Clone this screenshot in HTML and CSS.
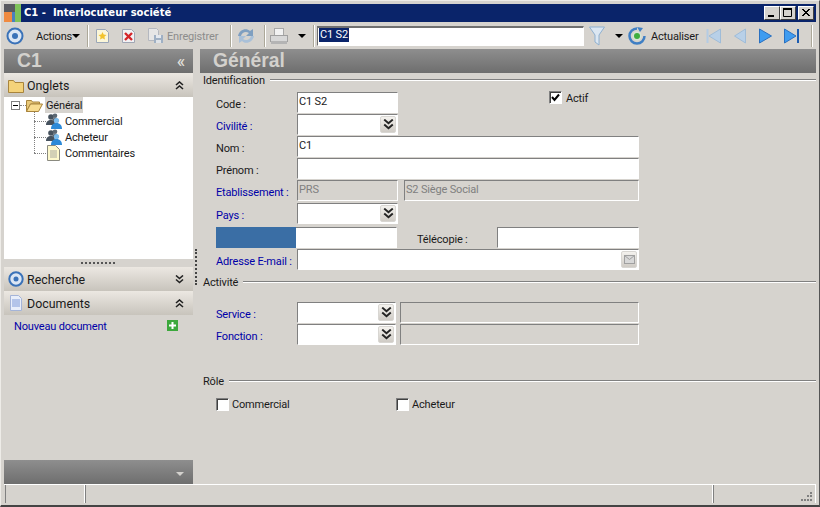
FILE: index.html
```html
<!DOCTYPE html>
<html lang="fr">
<head>
<meta charset="utf-8">
<title>C1 - Interlocuteur société</title>
<link rel="stylesheet" href="styles.css">
</head>
<body>
<svg class="defs" width="0" height="0" aria-hidden="true"><defs>
  <g id="people"><circle cx="5" cy="4" r="2.800" fill="#46525e"/><path d="M0 12c0-3.500 2-5 5-5s4 1.500 4 5z" fill="#46525e"/><circle cx="9" cy="2.800" r="2.300" fill="#5c6873"/><path d="M6 8c0-2 1-3 3-3s4 1.500 4 4z" fill="#5c6873"/><circle cx="10.500" cy="7.500" r="2.600" fill="#7cbcec"/><path d="M5 16c0-3.500 2-6 5.500-6s5.500 2.500 5.500 6z" fill="#2c8ad8"/></g>
  <path id="dd" d="M1 .5l3.500 3 3.500-3M1 4.500l3.500 3 3.500-3" fill="none" stroke="#222" stroke-width="1.600"/>
  <path id="uu" d="M1 4l3.500-3 3.500 3M1 8l3.500-3 3.500 3" fill="none" stroke="#222" stroke-width="1.600"/>
</defs></svg>
<div class="window">
  <div class="titlebar">
    <svg class="logo" width="17" height="18" viewBox="0 0 17 18"><rect width="11" height="8" fill="#5a5a60"/><rect x="11" width="6" height="18" fill="#7fc25a"/><rect y="8" width="8" height="10" fill="#f08a40"/><rect x="8" y="8" width="3" height="10" fill="#4a80c0"/></svg>
    <span class="title">C1 -&nbsp; Interlocuteur société</span>
    <div class="winbtns">
      <span class="winbtn"><svg width="14" height="12" viewBox="0 0 14 12"><rect x="3" y="8" width="6" height="2" fill="#000"/></svg></span>
      <span class="winbtn"><svg width="14" height="12" viewBox="0 0 14 12"><path d="M2.500 2.500h8v7h-8z" fill="none" stroke="#000"/><rect x="2" y="1" width="9" height="2"/></svg></span>
      <span class="winbtn close"><svg width="14" height="12" viewBox="0 0 14 12"><path d="M3 2l7 7M4 2l7 7M10 2l-7 7M11 2l-7 7" stroke="#000" fill="none"/></svg></span>
    </div>
  </div>

  <div class="toolbar">
    <svg class="t-target" width="18" height="18" viewBox="0 0 18 18"><circle cx="9" cy="9" r="7.500" fill="#dbe6f4" stroke="#3a72b8" stroke-width="2"/><circle cx="9" cy="9" r="3" fill="#3a72b8"/></svg>
    <span class="t-actions">Actions</span><i class="caret c-actions"></i>
    <i class="sep s1"></i>
    <svg class="t-new" width="15" height="16" viewBox="0 0 15 16"><path d="M1.500 1.500h9l3 3v10h-12z" fill="#fbf6d8" stroke="#9aa6b8"/><path d="M7.500 4l1.200 2.600 2.800.3-2.100 1.900.6 2.800-2.500-1.400-2.500 1.400.6-2.800-2.100-1.900 2.800-.3z" fill="#f2c32c"/></svg>
    <svg class="t-del" width="15" height="16" viewBox="0 0 15 16"><path d="M1.500 1.500h9l3 3v10h-12z" fill="#f2f2f4" stroke="#a0a6b4"/><path d="M4 5l7 7M11 5l-7 7" stroke="#d4262a" stroke-width="2.400"/></svg>
    <svg class="t-save" width="17" height="17" viewBox="0 0 17 17"><path d="M1.500 1.500h8l2 2v10h-10z" fill="#e6e6e6" stroke="#b4b8c0"/><rect x="7" y="8" width="9" height="8" fill="#9fb0c4"/><rect x="9" y="8" width="5" height="3" fill="#e4e8ee"/><rect x="9" y="13" width="5" height="3" fill="#dfe3e8"/></svg>
    <span class="t-save-text">Enregistrer</span>
    <i class="sep s2"></i>
    <svg class="t-sync" width="18" height="18" viewBox="0 0 18 18"><path d="M1 9C2 3 9 0 13 4l3-2v7H9l3-3C9 4 5 5 4 9z" fill="#7f9fc0"/><path d="M17 9c-1 6-8 9-12 5l-3 2V9h7l-3 3c3 2 7 1 8-3z" fill="#a9c0d8"/></svg>
    <i class="sep s3"></i>
    <svg class="t-print" width="18" height="18" viewBox="0 0 18 18"><rect x="4.500" y="1.500" width="9" height="7" fill="#f2f2f2" stroke="#a8a8a8"/><rect x=".5" y="8.500" width="17" height="6" fill="#d8d8d8" stroke="#a0a0a0"/><rect x="1" y="14" width="16" height="3" fill="#b4b4b4"/></svg>
    <i class="caret c-print"></i>
    <i class="sep s4"></i>
    <div class="search"><span class="selected">C1 S2</span></div>
    <svg class="t-filter" width="16" height="20" viewBox="0 0 16 20"><path d="M.5 1h15l-5.500 8v10l-4-3V9z" fill="#dce7f2" stroke="#8fb0d0"/></svg>
    <i class="caret c-filter"></i>
    <svg class="t-refresh" width="18" height="18" viewBox="0 0 18 18"><path d="M9 1.500a7.500 7.500 0 1 0 7.500 7.500" fill="none" stroke="#3f7fc4" stroke-width="2.500"/><path d="M9 0l6 1-3 4z" fill="#3f7fc4"/><circle cx="9" cy="9" r="4.500" fill="#d5e5d5"/><circle cx="9" cy="9" r="3" fill="#3fae3f"/></svg>
    <span class="t-refresh-text">Actualiser</span>
    <svg class="t-first" width="15" height="16" viewBox="0 0 15 16"><rect x=".5" y="1" width="2" height="14" fill="#b4cce4"/><path d="M14.500 1v14L3 8z" fill="#b8d0e8" stroke="#9fbcd8"/></svg>
    <svg class="t-prev" width="12" height="16" viewBox="0 0 12 16"><path d="M11.500 1v14L.5 8z" fill="#b8d0e8" stroke="#9fbcd8"/></svg>
    <svg class="t-next" width="13" height="16" viewBox="0 0 13 16"><path d="M.5 1v14L12.500 8z" fill="#3f9cf0" stroke="#2a70c0"/></svg>
    <svg class="t-last" width="16" height="16" viewBox="0 0 16 16"><path d="M.5 1v14L12 8z" fill="#3f9cf0" stroke="#2a70c0"/><rect x="13" y="1" width="2" height="14" fill="#1c5cb0"/></svg>
    <i class="sep s5"></i>
  </div>

  <div class="main">
    <aside class="left">
      <div class="band-dark left-head"><span class="big">C1</span><span class="collapse">«</span></div>
      <div class="band"><svg class="band-ico" width="16" height="15" viewBox="0 0 16 15"><path d="M.5 2.500h5l1.500 2h8.500v10H.5z" fill="#f4d27a" stroke="#a8843c"/></svg><span class="band-text">Onglets</span><svg class="chev" width="9" height="9" viewBox="0 0 9 9"><use href="#uu"/></svg></div>
      <div class="tree">
        <div class="tree-row root">
          <span class="box"></span><i class="dot-h short"></i>
          <svg width="17" height="14" viewBox="0 0 17 14"><path d="M.5 2.500h5l1 1.500h7v2h-9l-4 7.500z" fill="#e8c878" stroke="#a8843c"/><path d="M.5 13.500l4-7.500h12l-4 7.500z" fill="#f8dc90" stroke="#a8843c"/></svg>
          <span class="tree-sel">Général</span>
        </div>
        <div class="tree-row child"><i class="dot-h"></i><svg class="people" width="16" height="16" viewBox="0 0 16 16"><use href="#people"/></svg><span>Commercial</span></div>
        <div class="tree-row child"><i class="dot-h"></i><svg class="people" width="16" height="16" viewBox="0 0 16 16"><use href="#people"/></svg><span>Acheteur</span></div>
        <div class="tree-row child"><i class="dot-h"></i><svg class="note" width="13" height="16" viewBox="0 0 13 16"><path d="M.5.500h8l4 4v11H.5z" fill="#fdf8cc" stroke="#8a8a80"/><path d="M3 6h7M3 8h7M3 10h7M3 12h7" stroke="#a8a8a0"/></svg><span>Commentaires</span></div>
      </div>
      <div class="grip"><i></i></div>
      <div class="band"><svg class="band-ico" width="16" height="16" viewBox="0 0 16 16"><circle cx="8" cy="8" r="6.700" fill="#dbe6f4" stroke="#3a72b8" stroke-width="2"/><circle cx="8" cy="8" r="2.500" fill="#3a72b8"/></svg><span class="band-text">Recherche</span><svg class="chev" width="9" height="9" viewBox="0 0 9 9"><use href="#dd"/></svg></div>
      <div class="band"><svg class="band-ico" width="16" height="16" viewBox="0 0 16 16"><path d="M2.500.500h8l3 3v12h-11z" fill="#e8eefa" stroke="#a4b4d8"/><path d="M4 5h8M4 7h8M4 9h8M4 11h8" stroke="#7f9ad8"/></svg><span class="band-text">Documents</span><svg class="chev" width="9" height="9" viewBox="0 0 9 9"><use href="#uu"/></svg></div>
      <div class="doc-row"><a class="blue">Nouveau document</a><svg width="11" height="11" viewBox="0 0 11 11"><rect width="11" height="11" fill="#3ca83c"/><path d="M5.500 2v7M2 5.500h7" stroke="#fff" stroke-width="2"/></svg></div>
      <div class="spacer"></div>
      <div class="band-dark foot"><i class="foot-caret"></i></div>
    </aside>

    <div class="splitter"><i></i></div>

    <section class="right">
      <div class="band-dark right-head"><span class="big">Général</span></div>
      <div class="form">
        <div class="legend l-id"><span>Identification</span><i></i></div>
        <div class="row r-code">
          <label class="lab">Code :</label><div class="field w101"><span>C1 S2</span></div>
          <div class="actif"><span class="check on"><svg width="9" height="9" viewBox="0 0 9 9"><path d="M1 4l2.500 3L8 1.500" fill="none" stroke="#000" stroke-width="2"/></svg></span><span>Actif</span></div>
        </div>
        <div class="row"><label class="lab blue">Civilité :</label><div class="field w101 combo"><span class="ddb"><svg width="11" height="11" viewBox="0 0 9 9"><use href="#dd"/></svg></span></div></div>
        <div class="row"><label class="lab">Nom :</label><div class="field w342"><span>C1</span></div></div>
        <div class="row"><label class="lab">Prénom :</label><div class="field w342"></div></div>
        <div class="row"><label class="lab blue">Etablissement :</label><div class="field w101 off"><span>PRS</span></div><div class="field w235 off"><span>S2 Siège Social</span></div></div>
        <div class="row r-pays"><label class="lab blue">Pays :</label><div class="field w101 combo"><span class="ddb"><svg width="11" height="11" viewBox="0 0 9 9"><use href="#dd"/></svg></span></div></div>
        <div class="row r-tel"><div class="bluebox"></div><div class="field w101 flat"></div><label class="lab-fax">Télécopie :</label><div class="field w142"></div></div>
        <div class="row"><label class="lab blue">Adresse E-mail :</label><div class="field w342 combo"><span class="ddb mail"><svg width="11" height="9" viewBox="0 0 11 9"><rect x=".5" y=".5" width="10" height="8" fill="#d8d8d8" stroke="#a0a0a0"/><path d="M.5.500l5 4 5-4" fill="none" stroke="#a0a0a0"/></svg></span></div></div>
        <div class="legend l-act"><span>Activité</span><i></i></div>
        <div class="row r-serv"><label class="lab blue">Service :</label><div class="field w99 combo"><span class="ddb"><svg width="11" height="11" viewBox="0 0 9 9"><use href="#dd"/></svg></span></div><div class="field w239 off"></div></div>
        <div class="row"><label class="lab blue">Fonction :</label><div class="field w99 combo"><span class="ddb"><svg width="11" height="11" viewBox="0 0 9 9"><use href="#dd"/></svg></span></div><div class="field w239 off"></div></div>
        <div class="legend l-role"><span>Rôle</span><i></i></div>
        <div class="roles">
          <div class="role r1"><span class="check"></span><span class="role-text">Commercial</span></div>
          <div class="role"><span class="check"></span><span class="role-text">Acheteur</span></div>
        </div>
      </div>
    </section>
  </div>

  <div class="status">
    <div class="cell c1"></div><div class="cell c2"></div>
    <div class="cell c3"><svg width="12" height="11" viewBox="0 0 12 11" fill="#808080"><rect x="9" y="1" width="2" height="2"/><rect x="6" y="4" width="2" height="2"/><rect x="9" y="4" width="2" height="2"/><rect x="3" y="8" width="2" height="2"/><rect x="6" y="8" width="2" height="2"/><rect x="9" y="8" width="2" height="2"/><rect y="8" width="2" height="2"/></svg></div>
  </div>
</div>
</body>
</html>
```

FILE: styles.css
```css
* { box-sizing: border-box; }
html, body { margin: 0; height: 100%; }
body { width: 820px; height: 507px; overflow: hidden; background: #d6d3ce; font: 11px/16px Roboto, "Noto Sans", sans-serif; letter-spacing: -0.17px; color: #1a1a1a; }
.defs { display: block; height: 0; }
.window { width: 820px; height: 507px; display: flex; flex-direction: column; background: #d6d3ce; border-top: 1px solid #eeece8; border-left: 1px solid #eeece8; border-right: 1px solid #555; border-bottom: 2px solid #444; padding: 3px 3px 0; }

.titlebar { height: 18px; flex: none; background: #0a246a; display: flex; align-items: center; color: #fff; }
.logo { flex: none; }
.title { margin-left: 3px; font: bold 10px/14px "DejaVu Sans", sans-serif; letter-spacing: 0; }
.winbtns { margin-left: auto; display: flex; margin-right: 2px; }
.winbtn { width: 16px; height: 14px; background: #d6d3ce; border: 1px solid; border-color: #fff #404040 #404040 #fff; display: flex; }
.winbtn svg { display: block; }
.close { margin-left: 2px; }

.toolbar { height: 27px; flex: none; display: flex; align-items: center; }
.toolbar svg, .toolbar i { flex: none; }
.t-target { margin-left: 2px; }
.t-actions { margin-left: 12px; width: 35px; padding-top: 2px; }
.caret { display: block; width: 0; height: 0; border: 4px solid transparent; border-top-color: #000; border-bottom-width: 0; }
.c-actions { margin-left: 1px; }
.sep { display: block; width: 2px; height: 22px; background: #aca899; border-right: 1px solid #fff; }
.s1 { margin-left: 7px; }
.t-new { margin-left: 6px; }
.t-del { margin-left: 11px; }
.t-save { margin-left: 11px; }
.t-save-text { margin-left: 3px; width: 54px; padding-top: 2px; color: #8c8c8c; white-space: nowrap; }
.s2 { margin-left: 9px; }
.t-sync { margin-left: 5px; }
.s3 { margin-left: 9px; }
.t-print { margin-left: 4px; }
.c-print { margin-left: 10px; }
.s4 { margin-left: 7px; }
.search { margin-left: 2px; width: 267px; height: 20px; flex: none; background: #fff; border: 1px solid; border-color: #707070 #fff #fff #707070; border-top-width: 2px; padding-left: 1px; line-height: 14px; }
.selected { background: #0a246a; color: #fff; display: inline-block; padding: 0 1px; height: 14px; }
.t-filter { margin-left: 5px; }
.c-filter { margin-left: 10px; }
.t-refresh { margin-left: 5px; }
.t-refresh-text { margin-left: 5px; width: 47px; padding-top: 2px; white-space: nowrap; }
.t-first { margin-left: 8px; }
.t-prev { margin-left: 13px; }
.t-next { margin-left: 13px; }
.t-last { margin-left: 12px; }
.s5 { margin-left: 11px; }

.main { flex: 1; display: flex; min-height: 0; }
.left { width: 189px; flex: none; display: flex; flex-direction: column; }
.band-dark { background: linear-gradient(#8e8e8e, #6e6e6e); display: flex; align-items: center; height: 24px; flex: none; color: #d3d1cd; }
.big { font: bold 19.3px/24px "Liberation Sans", sans-serif; letter-spacing: 0; }
.left-head .big { margin-left: 13px; }
.collapse { margin-left: auto; margin-right: 8px; font-size: 18px; color: #e4e2de; }
.band { height: 24px; flex: none; display: flex; align-items: center; background: linear-gradient(#ece8e2, #c8c4bc); }
.band-ico { margin-left: 4px; flex: none; }
.band-text { margin-left: 3px; font-size: 12.4px; letter-spacing: 0; padding-top: 1px; }
.chev { margin-left: auto; margin-right: 9px; flex: none; }
.tree { height: 162px; flex: none; background: #fff; padding: 0 0 0 7px; position: relative; }
.tree-row { display: flex; align-items: center; height: 16px; white-space: nowrap; }
.box { width: 9px; height: 9px; flex: none; border: 1px solid #808080; background: linear-gradient(#000,#000) center/5px 1px no-repeat #fff; }
.dot-h { display: block; width: 5px; height: 0; flex: none; border-top: 1px dotted #808080; }
.short { width: 6px; }
.tree-sel { margin-left: 2px; background: #d6d3ce; padding: 0 1px; height: 16px; line-height: 18px; }
.child { margin-left: 23px; }
.child .dot-h { width: 12px; }
.child span { margin-left: 3px; padding-top: 2px; }
.note { margin-left: 1px; margin-right: 2px; }
.tree::before { content: ""; position: absolute; left: 30px; top: 15px; height: 41px; border-left: 1px dotted #808080; }
.grip { height: 8px; flex: none; display: flex; align-items: center; justify-content: center; }
.grip i { display: block; width: 35px; height: 2px; background: repeating-linear-gradient(90deg, #555 0 2px, transparent 2px 4px); }
.doc-row { display: flex; align-items: center; justify-content: space-between; padding: 0 15px 0 10px; height: 21px; flex: none; }
.doc-row a { padding-top: 2px; }
.blue { color: #0000a8; }
.spacer { flex: 1; }
.foot { justify-content: flex-end; }
.foot-caret { display: block; width: 0; height: 0; border: 4px solid transparent; border-top-color: #d3d1cd; border-bottom-width: 0; margin: 3px 9px 0 0; }

.splitter { width: 7px; flex: none; display: flex; justify-content: center; }
.splitter i { display: block; width: 0; height: 36px; margin-top: 200px; margin-left: -1px; border-left: 2px dotted #444; }

.right { flex: 1; min-width: 0; display: flex; flex-direction: column; }
.right-head .big { margin-left: 13px; }
.form { padding: 0 0 0 3px; }
.legend { display: flex; align-items: center; height: 14px; }
.legend span { padding-top: 2px; }
.legend i { flex: 1; height: 2px; margin-left: 5px; background: #808080; border-bottom: 1px solid #fff; }
.l-act { margin-top: 4px; }
.l-role { margin-top: 28px; }
.row { display: flex; height: 22px; align-items: stretch; }
.r-code { margin-top: 5px; }
.r-pays { margin-top: 1px; }
.r-tel { margin-top: 2px; margin-left: 13px; }
.r-serv { margin-top: 13px; }
.lab { width: 81px; margin-left: 13px; flex: none; padding-top: 5px; white-space: nowrap; }
.lab-fax { width: 80px; margin-left: 20px; flex: none; padding-top: 5px; }
.field { background: #fff; border: 1px solid; border-color: #808080 transparent transparent #808080; flex: none; height: 21px; padding: 1px 0 0 1px; }
.field span { display: block; }
.w101 { width: 101px; }
.w99 { width: 99px; }
.w342 { width: 342px; }
.w235 { width: 235px; margin-left: 6px; }
.w239 { width: 239px; margin-left: 4px; }
.w142 { width: 142px; }
.off { background: #d6d3ce; color: #808080; border-color: #808080 #fff #fff #808080; }
.flat { border-left: 0; }
.bluebox { width: 80px; height: 21px; background: #3a6ea5; flex: none; }
.combo { display: flex; justify-content: flex-end; padding: 1px 1px 0 0; }
.field .ddb { width: 16px; height: 17px; background: linear-gradient(#f4f2ee, #cfcbc5); border: 1px solid #d8d6d2; border-radius: 2px; display: flex; align-items: center; justify-content: center; }
.actif { display: flex; align-items: flex-start; margin-left: 151px; gap: 4px; margin-top: -1px; }
.check { display: flex; align-items: center; justify-content: center; width: 13px; height: 13px; flex: none; background: #fff; border: 1px solid; border-color: #808080 #fff #fff #808080; box-shadow: inset 1px 1px 0 #404040; }
.roles { display: flex; padding: 7px 0 0 13px; }
.role { display: flex; align-items: center; gap: 3px; }
.role-text { padding-top: 2px; }
.r1 { width: 180px; }

.status { height: 19px; margin-bottom: 2px; flex: none; display: flex; padding-left: 1px; border-top: 1px solid #fff; }
.cell { border-left: 1px solid #808080; border-right: 1px solid #fff; }
.c1 { width: 80px; }
.c2 { width: 628px; }
.c3 { flex: 1; display: flex; align-items: flex-end; justify-content: flex-end; padding: 0 2px 1px 0; }
```
